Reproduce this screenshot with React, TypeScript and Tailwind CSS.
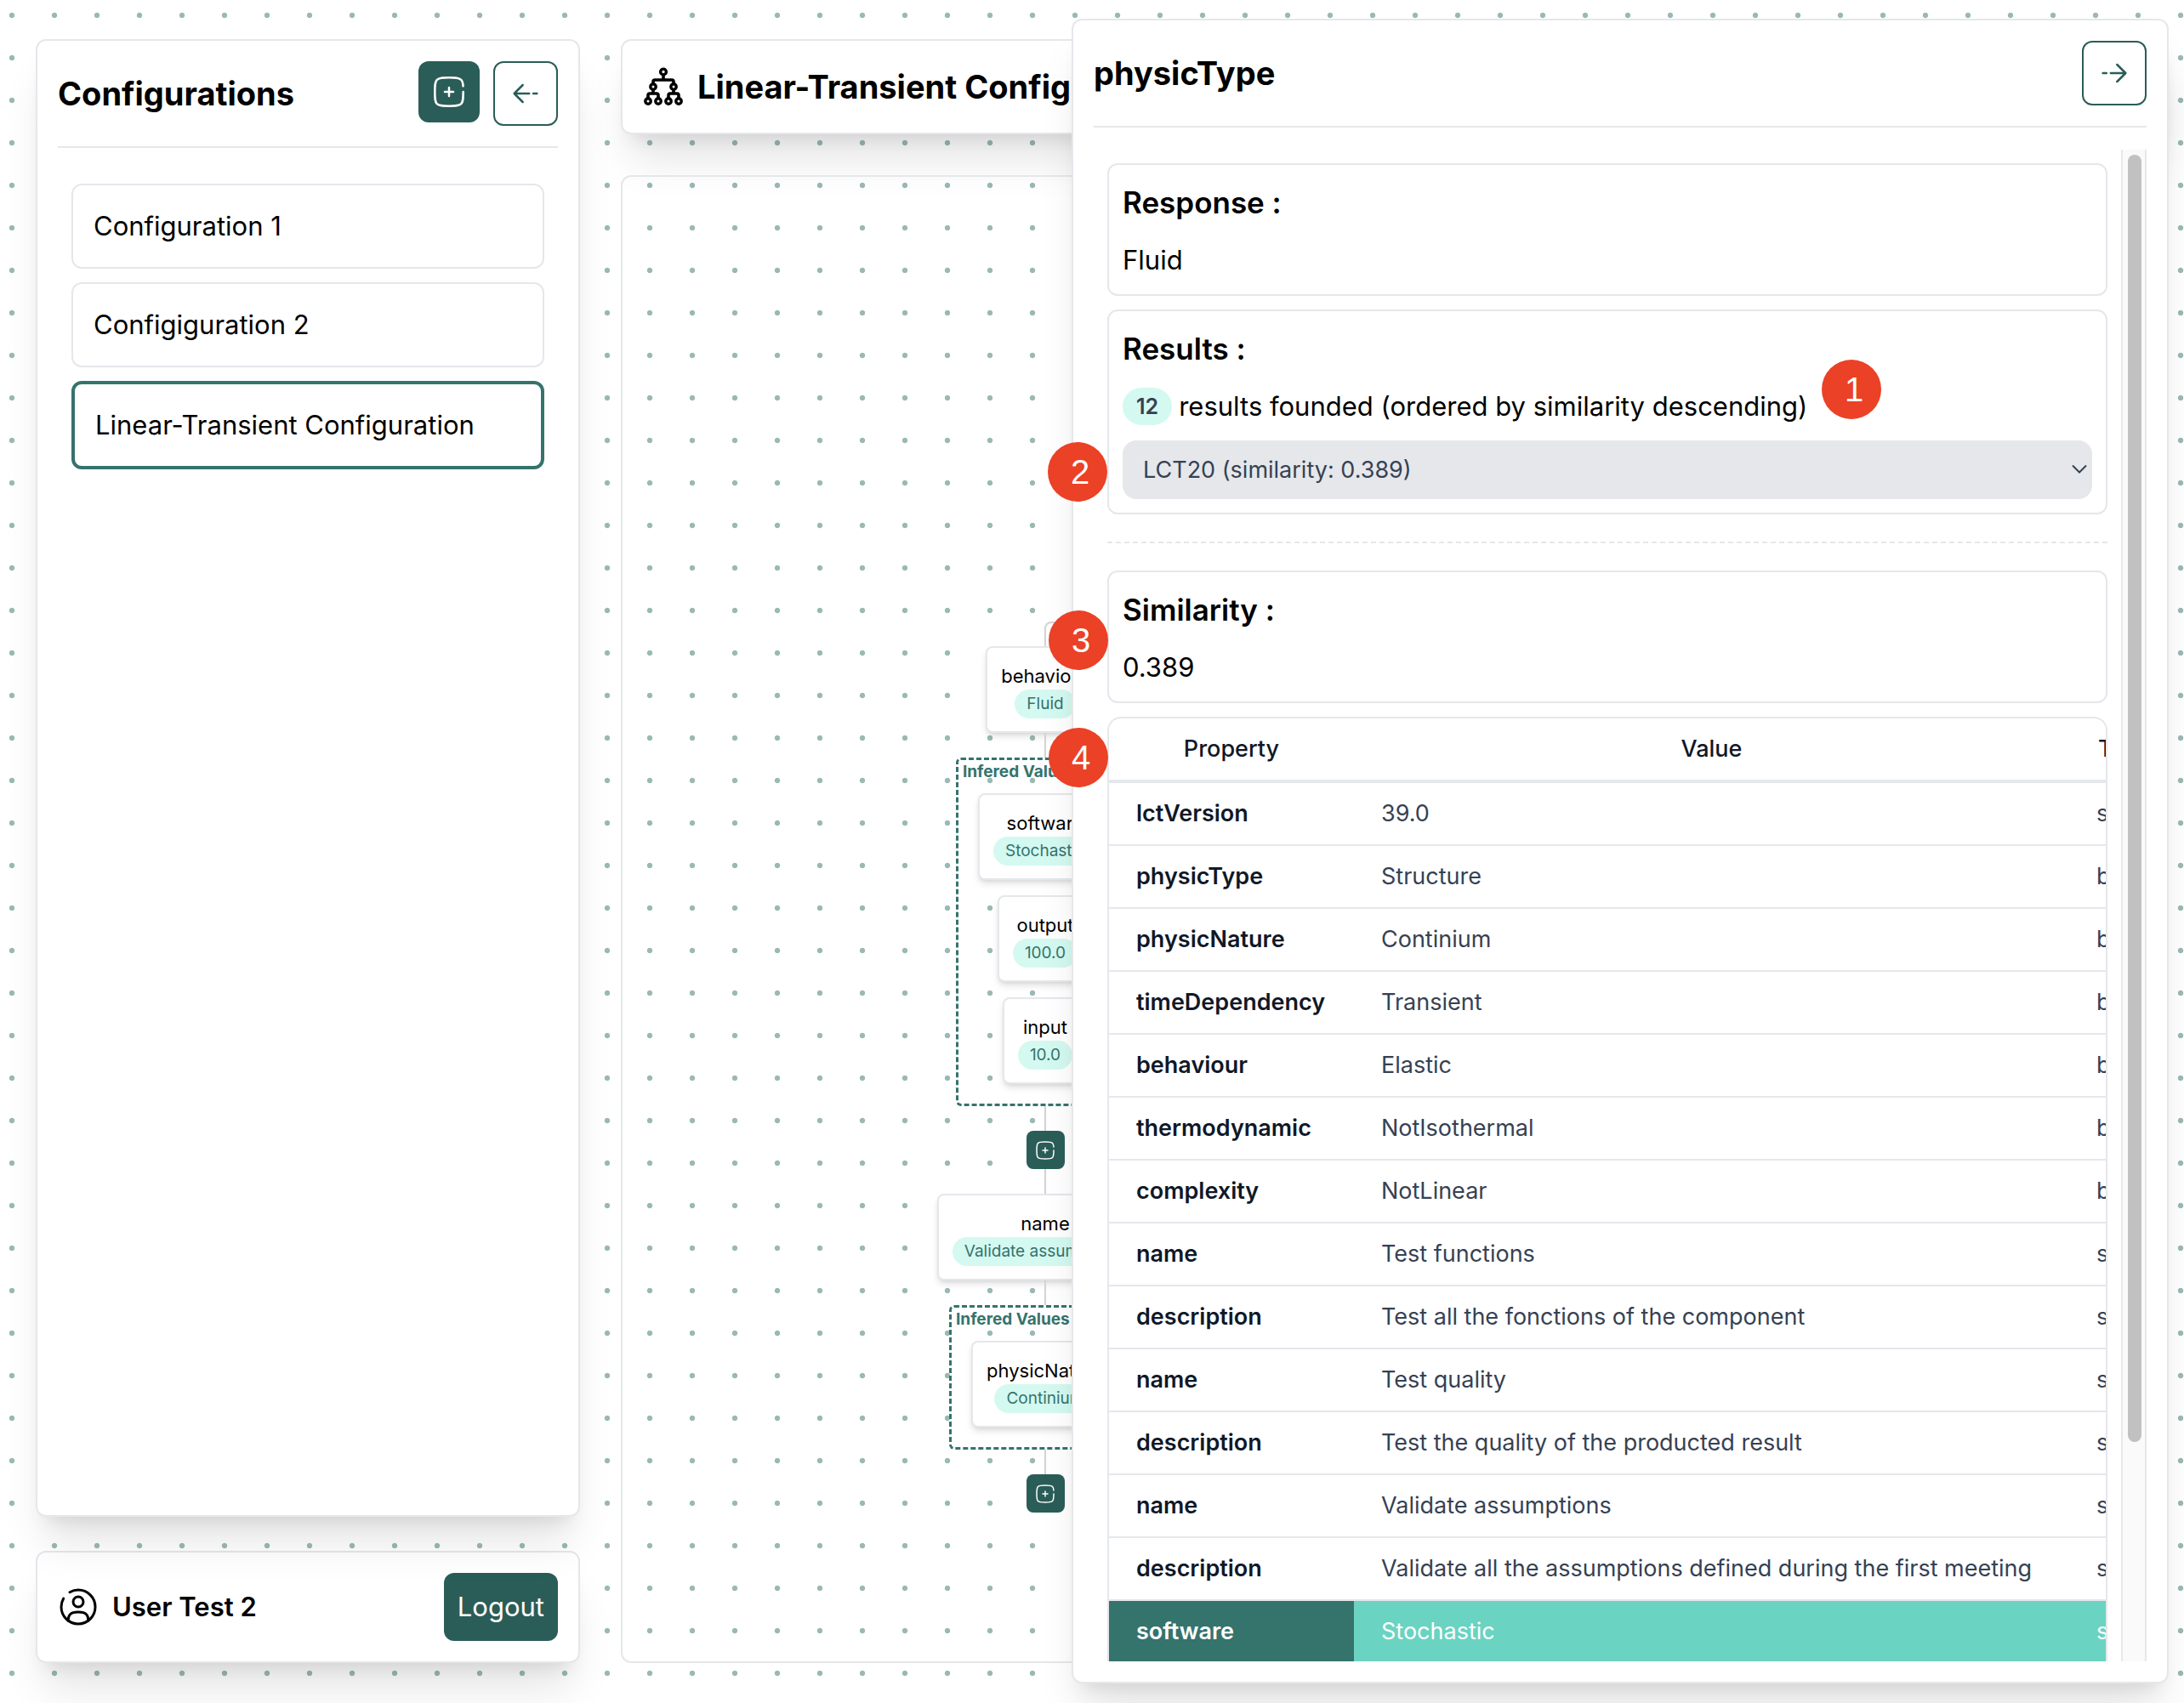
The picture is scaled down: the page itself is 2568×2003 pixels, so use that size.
import type { ReactNode } from "react";

const PANEL_SHADOW = "shadow-[0_40px_50px_-10px_rgba(0,0,0,0.1),0_16px_20px_-12px_rgba(0,0,0,0.1)]";

const configurations = ["Configuration 1", "Configiguration 2", "Linear-Transient Configuration"];
const selectedConfiguration = "Linear-Transient Configuration";

type Row = { property: string; value: string; type: string; highlighted?: boolean };

const rows: Row[] = [
  { property: "lctVersion", value: "39.0", type: "string" },
  { property: "physicType", value: "Structure", type: "bool" },
  { property: "physicNature", value: "Continium", type: "bool" },
  { property: "timeDependency", value: "Transient", type: "bool" },
  { property: "behaviour", value: "Elastic", type: "bool" },
  { property: "thermodynamic", value: "NotIsothermal", type: "bool" },
  { property: "complexity", value: "NotLinear", type: "bool" },
  { property: "name", value: "Test functions", type: "string" },
  { property: "description", value: "Test all the fonctions of the component", type: "string" },
  { property: "name", value: "Test quality", type: "string" },
  { property: "description", value: "Test the quality of the producted result", type: "string" },
  { property: "name", value: "Validate assumptions", type: "string" },
  {
    property: "description",
    value: "Validate all the assumptions defined during the first meeting",
    type: "string",
  },
  { property: "software", value: "Stochastic", type: "string", highlighted: true },
];

function AddSquareIcon({ className }: { className: string }) {
  return (
    <svg viewBox="0 0 24 24" fill="none" stroke="currentColor" strokeWidth="1.5" strokeLinecap="round" className={className} aria-hidden="true">
      <path d="M15 12H9m3-3v6" />
      <path d="M22 12c0 4.714 0 7.071-1.465 8.535C19.072 22 16.714 22 12 22s-7.071 0-8.536-1.465C2 19.072 2 16.714 2 12s0-7.071 1.464-8.536C4.93 2 7.286 2 12 2s7.071 0 8.535 1.464c.974.974 1.3 2.343 1.41 4.536" />
    </svg>
  );
}

function ArrowIcon({ direction }: { direction: "left" | "right" }) {
  return (
    <svg viewBox="0 0 24 24" fill="none" stroke="currentColor" strokeWidth="1.5" strokeLinecap="round" strokeLinejoin="round" className="size-10" aria-hidden="true">
      {direction === "left" ? (
        <path d="M10 6l-6 6 6 6M4 12h10.5M20 12h-2.5" />
      ) : (
        <path d="M14 6l6 6-6 6M20 12H9.5M4 12h2.5" />
      )}
    </svg>
  );
}

function UserCircleIcon() {
  return (
    <svg viewBox="0 0 24 24" fill="none" stroke="currentColor" strokeWidth="1.5" strokeLinecap="round" className="size-12" aria-hidden="true">
      <circle cx="12" cy="9" r="3" />
      <path d="M17.97 20c-.16-2.892-1.045-5-5.97-5s-5.81 2.108-5.97 5" />
      <path d="M7 3.338A9.95 9.95 0 0 1 12 2c5.523 0 10 4.477 10 10s-4.477 10-10 10S2 17.523 2 12c0-1.821.487-3.53 1.338-5" />
    </svg>
  );
}

function TreeIcon() {
  return (
    <svg viewBox="0 0 48 48" fill="none" stroke="currentColor" className="size-12 shrink-0" aria-hidden="true">
      <g strokeWidth="3.4">
        <circle cx="24" cy="6.5" r="3.4" />
        <circle cx="12" cy="24" r="3.2" />
        <circle cx="36" cy="24" r="3.2" />
        <circle cx="6" cy="41" r="3.2" />
        <circle cx="18" cy="41" r="3.2" />
        <circle cx="30" cy="41" r="3.2" />
        <circle cx="42" cy="41" r="3.2" />
      </g>
      <g strokeWidth="3.6" strokeLinejoin="round">
        <path d="M24 10v6M12 20.5V18q0-2 2-2h20q2 0 2 2v2.500" />
        <path d="M12 27.500V32M6 37.500V34q0-2 2-2h8q2 0 2 2v3.500" />
        <path d="M36 27.500V32M30 37.500V34q0-2 2-2h8q2 0 2 2v3.500" />
      </g>
    </svg>
  );
}

function Connector() {
  return <div className="h-[29px] w-0.5 bg-[#d4d4d4]" />;
}

function Node({ name, value }: { name: string; value: string }) {
  return (
    <div className="flex flex-col items-center rounded-lg border-2 border-gray-200 bg-white px-4 pt-[17px] pb-[15px] whitespace-nowrap shadow-[0_5px_8px_-1px_rgba(0,0,0,0.12),0_2px_5px_-2px_rgba(0,0,0,0.1)]">
      <span className="text-[22px] leading-8">{name}</span>
      <span className="rounded-full bg-[#d4f9f0] px-3.5 text-[19px] leading-[34px] text-[#35736d]">{value}</span>
    </div>
  );
}

function InferedGroup({ children }: { children: ReactNode }) {
  return (
    <div className="rounded-md border-3 border-dashed border-[#35736d] pb-[23px]">
      <p className="mb-[11px] pl-[5px] text-[19px] leading-7 font-bold text-[#35736d]">Infered Values</p>
      <div className="flex flex-col items-center gap-[18px] px-[23px]">{children}</div>
    </div>
  );
}

function AddNodeButton() {
  return (
    <button type="button" aria-label="Add value" className="flex size-[45px] items-center justify-center rounded-lg bg-[#2b5d58] text-white">
      <AddSquareIcon className="size-6" />
    </button>
  );
}

function Marker({ label, className }: { label: string; className: string }) {
  return (
    <span className={`absolute flex size-[70px] items-center justify-center rounded-full bg-[#eb4126] pl-1.5 font-['Liberation_Sans',sans-serif] text-[40px] leading-none text-white ${className}`}>
      {label}
    </span>
  );
}

function Card({ title, children }: { title: string; children: ReactNode }) {
  return (
    <section className="rounded-xl border-2 border-gray-200 p-4">
      <h3 className="mb-4 text-[35px] leading-[56px] font-semibold">{title}</h3>
      {children}
    </section>
  );
}

function Sidebar() {
  return (
    <aside className="flex w-[640px] shrink-0 flex-col gap-10">
      <section className={`relative z-10 flex flex-1 flex-col rounded-xl border-2 border-gray-200 bg-white p-6 ${PANEL_SHADOW}`}>
        <header className="flex items-start justify-between border-b-2 border-gray-200 pb-6">
          <h2 className="self-center text-[38px] leading-[56px] font-bold">Configurations</h2>
          <div className="flex items-start gap-4">
            <button type="button" aria-label="Add configuration" className="flex size-[72px] items-center justify-center rounded-xl bg-[#2b5d58] text-white">
              <AddSquareIcon className="size-10" />
            </button>
            <button type="button" aria-label="Collapse sidebar" className="flex size-[76px] items-center justify-center rounded-xl border-2 border-[#2b5d58] text-[#2b5d58]">
              <ArrowIcon direction="left" />
            </button>
          </div>
        </header>
        <ul className="mt-[26px] flex flex-col gap-4 p-4">
          {configurations.map((name) => (
            <li key={name}>
              <button
                type="button"
                className={
                  name === selectedConfiguration
                    ? "w-full rounded-xl border-4 border-[#35736d] p-6 text-left text-[31px] leading-[48px]"
                    : "w-full rounded-xl border-2 border-gray-200 p-6 text-left text-[31px] leading-[48px]"
                }
              >
                {name}
              </button>
            </li>
          ))}
        </ul>
      </section>
      <section className={`flex items-center justify-between rounded-xl border-2 border-gray-200 bg-white p-6 ${PANEL_SHADOW}`}>
        <div className="flex items-center gap-4">
          <UserCircleIcon />
          <span className="text-[31px] leading-[48px] font-semibold">User Test 2</span>
        </div>
        <button type="button" className="rounded-xl bg-[#2b5d58] p-4 text-[31px] leading-[48px] text-white">
          Logout
        </button>
      </section>
    </aside>
  );
}

function Workspace() {
  return (
    <main className="flex min-w-0 flex-1 flex-col gap-12">
      <header className={`flex items-center gap-4 rounded-xl border-2 border-gray-200 bg-white px-6 py-[26px] ${PANEL_SHADOW}`}>
        <TreeIcon />
        <h1 className="text-[38px] leading-[56px] font-bold whitespace-nowrap">Linear-Transient Configuration</h1>
      </header>
      <section className="relative flex-1 rounded-xl border-2 border-gray-200">
        <div className="absolute top-[523px] left-[369px] flex w-[256px] flex-col items-center">
          <div className="-mr-0.5 h-[29px] w-[131px] self-end rounded-tl-lg border-t-2 border-l-2 border-[#d4d4d4]" />
          <Node name="behaviour" value="Fluid" />
          <Connector />
          <InferedGroup>
            <Node name="software" value="Stochastic" />
            <Node name="output" value="100.0" />
            <Node name="input" value="10.0" />
          </InferedGroup>
          <Connector />
          <AddNodeButton />
          <Connector />
          <Node name="name" value="Validate assumptions" />
          <Connector />
          <InferedGroup>
            <Node name="physicNature" value="Continium" />
          </InferedGroup>
          <Connector />
          <AddNodeButton />
        </div>
      </section>
    </main>
  );
}

function ResultSelect() {
  return (
    <div className="relative mt-4">
      <select
        aria-label="Result"
        className="block h-[69px] w-full appearance-none rounded-2xl bg-gray-200 px-6 text-[27px] leading-10 text-gray-700"
        defaultValue="LCT20"
      >
        <option value="LCT20">LCT20 (similarity: 0.389)</option>
      </select>
      <svg viewBox="0 0 20 12" fill="none" stroke="currentColor" strokeWidth="2" className="pointer-events-none absolute top-7 right-[5px] h-3 w-5 text-gray-700" aria-hidden="true">
        <path d="M2 1.500l8 8 8-8" />
      </svg>
    </div>
  );
}

function PropertyTable() {
  return (
    <div className="mt-4 overflow-hidden rounded-t-2xl border-2 border-b-0 border-gray-200">
      <table className="w-[1261px] table-fixed border-separate border-spacing-0 text-left text-[27px] leading-10 whitespace-nowrap">
        <colgroup>
          <col className="w-[288px]" />
          <col className="w-[841px]" />
          <col className="w-[132px]" />
        </colgroup>
        <thead>
          <tr className="text-center text-gray-900">
            <th scope="col" className="h-[76px] border-b-4 border-gray-200 font-medium">Property</th>
            <th scope="col" className="h-[76px] border-b-4 border-gray-200 font-medium">Value</th>
            <th scope="col" className="h-[76px] border-b-4 border-gray-200 font-medium">Type</th>
          </tr>
        </thead>
        <tbody>
          {rows.map((row, index) => (
            <tr key={index} className={row.highlighted ? "bg-[#6ad3c2] text-white" : "text-gray-700"}>
              <th
                scope="row"
                className={
                  row.highlighted
                    ? "border-b-2 border-gray-200 bg-[#35736d] px-8 py-4 font-semibold text-white"
                    : "border-b-2 border-gray-200 px-8 py-4 font-semibold text-gray-900"
                }
              >
                {row.property}
              </th>
              <td className="border-b-2 border-gray-200 px-8 py-4">{row.value}</td>
              <td className="border-b-2 border-gray-200 px-8 py-4">{row.type}</td>
            </tr>
          ))}
        </tbody>
      </table>
    </div>
  );
}

function DetailDrawer() {
  return (
    <aside className={`absolute top-[22px] right-[18px] bottom-[23px] z-20 flex w-[1290px] flex-col rounded-xl border-2 border-gray-200 bg-white p-6 ${PANEL_SHADOW}`}>
      <header className="flex items-center justify-between border-b-2 border-gray-200 pb-6">
        <h2 className="text-[38px] leading-[56px] font-bold">physicType</h2>
        <button type="button" aria-label="Close details" className="flex size-[76px] items-center justify-center rounded-xl border-2 border-[#2b5d58] text-[#2b5d58]">
          <ArrowIcon direction="right" />
        </button>
      </header>
      <div className="mt-[26px] flex min-h-0 flex-1">
        <div className="min-w-0 flex-1 overflow-hidden p-4">
          <div className="flex flex-col gap-4">
            <Card title="Response :">
              <p className="text-[31px] leading-[48px]">Fluid</p>
            </Card>
            <Card title="Results :">
              <p className="flex items-center gap-2 text-[31px] leading-[48px]">
                <span className="flex h-11 items-center rounded-full bg-[#d4f9f0] px-4 text-[25px] font-semibold text-gray-700">12</span>
                results founded (ordered by similarity descending)
              </p>
              <ResultSelect />
            </Card>
          </div>
          <hr className="my-8 border-t-2 border-dashed border-gray-200" />
          <Card title="Similarity :">
            <p className="text-[31px] leading-[48px]">0.389</p>
          </Card>
          <PropertyTable />
        </div>
        <div className="w-[30px] border-x-2 border-[#e8e8e8] bg-[#fafafa] pt-1.5 pb-[258px] pl-1.5">
          <div className="h-full w-4 rounded-full bg-[#c1c1c1]" />
        </div>
      </div>
      <Marker label="1" className="top-[399px] left-[880px]" />
      <Marker label="2" className="top-[496px] left-[-30px]" />
      <Marker label="3" className="top-[694px] left-[-29px]" />
      <Marker label="4" className="top-[832px] left-[-29px]" />
    </aside>
  );
}

export default function App() {
  return (
    <div className="relative flex h-screen gap-12 overflow-hidden bg-white bg-[radial-gradient(circle,#9ab9b5_2.8px,transparent_3.6px)] bg-[length:50px_50px] bg-[position:-11px_-7px] pt-[46px] pr-[18px] pb-[47px] pl-[42px] font-['Inter',sans-serif] text-black">
      <Sidebar />
      <Workspace />
      <DetailDrawer />
    </div>
  );
}
